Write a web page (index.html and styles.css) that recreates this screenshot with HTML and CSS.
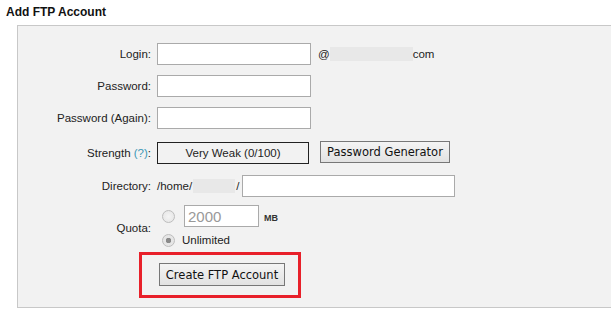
FILE: index.html
```html
<!DOCTYPE html>
<html lang="en">
<head>
  <meta charset="UTF-8">
  <title>Add FTP Account</title>
  <link rel="stylesheet" href="styles.css">
</head>
<body>
  <h3 class="title">Add FTP Account</h3>

  <div class="panel">
    <div class="row">
      <label class="label">Login:</label>
      <input type="text" class="field">
      <span class="domain">@<span class="mask mask-domain"></span>com</span>
    </div>

    <div class="row">
      <label class="label">Password:</label>
      <input type="password" class="field">
    </div>

    <div class="row">
      <label class="label">Password (Again):</label>
      <input type="password" class="field">
    </div>

    <div class="row row-strength">
      <label class="label">Strength <span class="help">(?)</span>:</label>
      <div class="strength">Very Weak (0/100)</div>
      <button type="button" class="btn btn-gen">Password Generator</button>
    </div>

    <div class="row row-dir">
      <label class="label">Directory:</label>
      <span class="home">/home/<span class="mask mask-user"></span>/</span>
      <input type="text" class="field field-dir">
    </div>

    <div class="row row-quota">
      <label class="label">Quota:</label>
      <div class="quota">
        <div class="quota-line">
          <input type="radio" name="quota" class="radio">
          <input type="text" class="field field-quota" value="2000">
          <span class="unit">MB</span>
        </div>
        <div class="quota-line">
          <input type="radio" name="quota" class="radio" checked>
          <span class="unlimited">Unlimited</span>
        </div>
      </div>
    </div>

    <div class="highlight">
      <button type="button" class="btn btn-create">Create FTP Account</button>
    </div>
  </div>
</body>
</html>
```

FILE: styles.css
```css
body {
  margin: 0;
  background-color: #fff;
  font-family: 'Liberation Sans', Arial, sans-serif;
  font-size: 11.5px;
  color: #222;
}

.title {
  margin: 0;
  padding: 5px 0 0 6px;
  height: 20px;
  font-size: 12px;
  font-weight: bold;
  color: #111;
}

.panel {
  margin-left: 17px;
  width: 600px;
  height: 283px;
  box-sizing: border-box;
  border: 1px solid #c8c8c8;
  background-color: #f2f2f2;
  padding-top: 12px;
}

.row {
  display: flex;
  align-items: center;
  height: 32px;
}

.row-strength {
  height: 37px;
}

.row-dir {
  height: 29px;
}

.row-quota {
  margin-top: 4px;
  height: 48px;
}

.label {
  width: 133px;
  margin-right: 6px;
  text-align: right;
  color: #222;
}

.help {
  color: #3c97b5;
}

.field {
  width: 154px;
  height: 22px;
  box-sizing: border-box;
  border: 1px solid #aaa;
  background-color: #fff;
  padding: 2px 4px;
  font-family: 'Liberation Sans', Arial, sans-serif;
  font-size: 12px;
  margin: 0;
}

.domain {
  margin-left: 7px;
  display: flex;
  align-items: center;
  color: #222;
}

.mask {
  display: inline-block;
  background-color: #e8e8e8;
  height: 14px;
}

.mask-domain {
  width: 83px;
}

.strength {
  width: 152px;
  height: 22px;
  box-sizing: border-box;
  border: 1px solid #222;
  text-align: center;
  line-height: 20px;
  color: #222;
}

.btn {
  height: 22px;
  box-sizing: border-box;
  border: 1px solid #777;
  border-radius: 0;
  background: linear-gradient(#f4f4f4, #e2e2e2);
  font-family: 'DejaVu Sans', Verdana, sans-serif;
  font-size: 11.5px;
  color: #111;
  padding: 0;
  white-space: nowrap;
}

.btn-gen {
  margin-left: 11px;
  width: 130px;
  margin-top: -2px;
}

.home {
  display: flex;
  align-items: center;
  color: #222;
}

.mask-user {
  width: 42px;
  margin: 0 1px 0 1px;
}

.field-dir {
  margin-left: 3px;
  width: 213px;
}

.quota {
  display: flex;
  flex-direction: column;
  align-self: stretch;
}

.quota-line {
  display: flex;
  align-items: center;
  height: 24px;
}

.radio {
  appearance: none;
  margin: 0 9px 0 5px;
  width: 13px;
  height: 13px;
  box-sizing: border-box;
  border: 1px solid #bdbdbd;
  border-radius: 50%;
  background: radial-gradient(circle, #f4f4f4 0%, #e4e4e4 100%);
}

.radio:checked {
  background: radial-gradient(circle, #8a8a8a 0 2.5px, #e6e6e6 3px);
}

.field-quota {
  width: 75px;
  font-size: 15px;
  color: #999;
  padding: 1px 3px;
}

.unit {
  margin: 4px 0 0 5px;
  font-size: 9px;
  font-weight: bold;
  color: #333;
}

.unlimited {
  margin-left: -2px;
  color: #222;
}

.highlight {
  margin-left: 121px;
  width: 162px;
  height: 46px;
  box-sizing: border-box;
  border: 3px solid #e8202a;
  padding: 8px 0 0 17px;
}

.btn-create {
  width: 126px;
  height: 23px;
  font-size: 11.5px;
}
```
